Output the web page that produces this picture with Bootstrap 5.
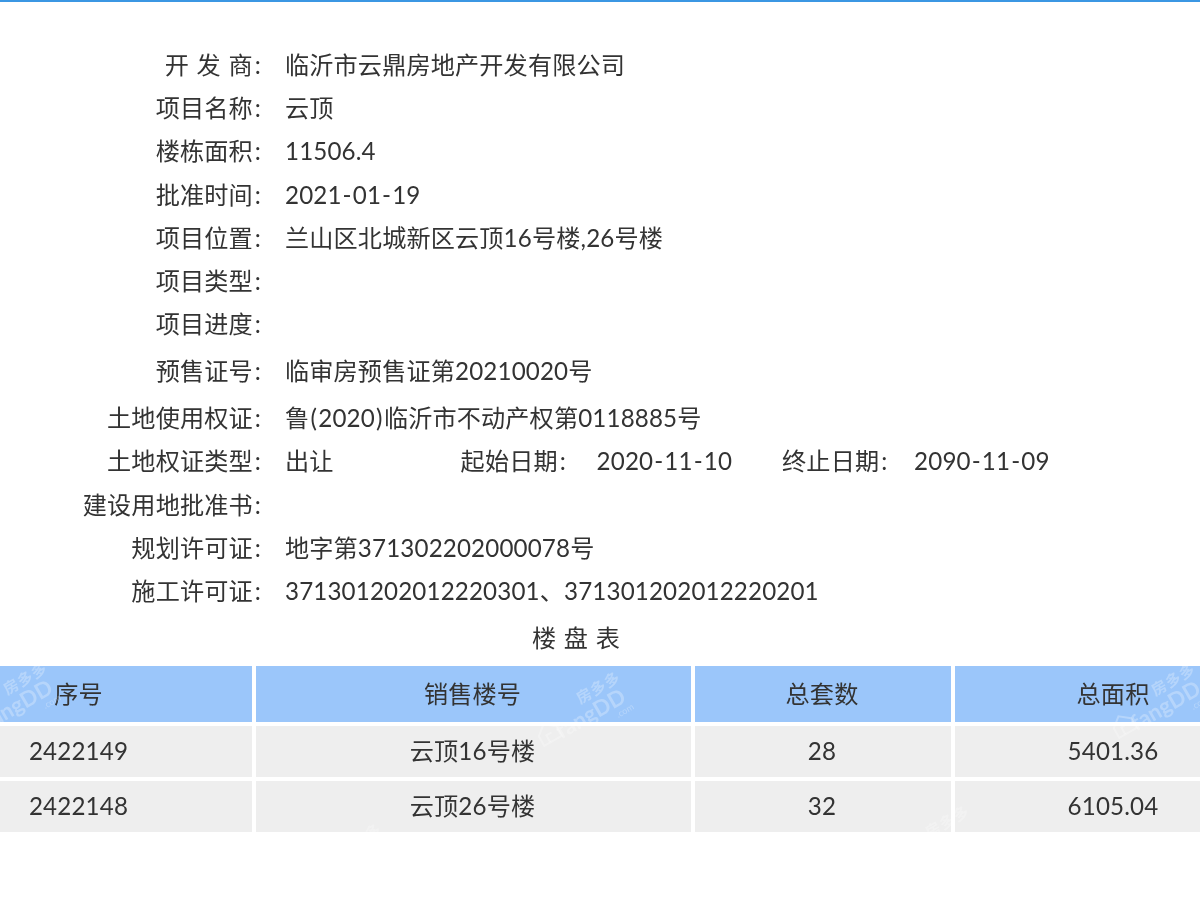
<!DOCTYPE html>
<html lang="zh-CN">
<head>
<meta charset="utf-8">
<title>楼盘信息</title>
<link rel="stylesheet" href="https://cdn.jsdelivr.net/npm/bootstrap@5.3.0/dist/css/bootstrap.min.css">
<style>
html,body{height:100%;overflow:hidden;background:#fff}
body{font-family:Lato,"Noto Sans CJK SC",sans-serif;color:#333;font-size:24.15px;letter-spacing:.15px;line-height:43.2px;word-spacing:1.3px;filter:blur(.3px)}
.topline{height:2px;background:#3b97e3}
.info{padding-top:41px}
.info-row{display:flex;height:43.2px}
.info-row.tall{height:47px;align-items:center;padding-top:4px}
.info-key{width:261px;text-align:right;flex:none;white-space:pre}
.info-key i,.info-mid i,.info-mid2 i{font-style:normal;margin-left:2px}
.info-val{margin-left:24px;white-space:pre}
.info-val .hy{margin:0 1px}
.info-val .pa{margin:0 1.2px}
.info-mid{margin-left:127px;width:136px;white-space:pre}
.info-mid2{margin-left:50px;width:132px;white-space:pre}
.plan-title{text-align:center;height:47px;line-height:50px;margin-top:1px;padding-right:48px}
.plan-wrap{position:relative;margin-left:-99px;width:1374px}
.plan-table{border-collapse:separate;border-spacing:4px;width:1374px;margin:2px 0 0;table-layout:fixed}
.plan-table th,.plan-table td{text-align:center;font-weight:400;vertical-align:middle;padding:0;color:#333}
.plan-table th{background:#9bc6fa;height:56px;padding-bottom:1px}
.plan-table td{background:#eee;height:51px;padding-bottom:2px}
.plan-table .nudge{padding-right:2px}
.wmk{position:absolute;width:120px;height:70px;transform:rotate(-30deg);color:rgba(255,255,255,.27);pointer-events:none;word-spacing:0;letter-spacing:0}
.wmk-cn{position:absolute;left:54px;top:11px;font-size:15px;line-height:18px;font-weight:700;letter-spacing:1px}
.wmk-en{position:absolute;left:20px;top:26px;font-size:22px;line-height:26px;font-weight:700}
.wmk-com{position:absolute;left:80px;top:49px;font-size:9px;line-height:10px}
.wmk-house{position:absolute;left:0;top:22px;width:24px;height:24px}
</style>
</head>
<body>
<div class="topline"></div>
<div class="info">
<div class="info-row"><div class="info-key">开 发 商<i>:</i></div><div class="info-val">临沂市云鼎房地产开发有限公司</div></div>
<div class="info-row"><div class="info-key">项目名称<i>:</i></div><div class="info-val">云顶</div></div>
<div class="info-row"><div class="info-key">楼栋面积<i>:</i></div><div class="info-val">11506.4</div></div>
<div class="info-row"><div class="info-key">批准时间<i>:</i></div><div class="info-val">2021<span class="hy">-</span>01<span class="hy">-</span>19</div></div>
<div class="info-row"><div class="info-key">项目位置<i>:</i></div><div class="info-val">兰山区北城新区云顶16号楼,26号楼</div></div>
<div class="info-row"><div class="info-key">项目类型<i>:</i></div><div class="info-val"></div></div>
<div class="info-row"><div class="info-key">项目进度<i>:</i></div><div class="info-val"></div></div>
<div class="info-row tall"><div class="info-key">预售证号<i>:</i></div><div class="info-val">临审房预售证第20210020号</div></div>
<div class="info-row tall"><div class="info-key">土地使用权证<i>:</i></div><div class="info-val">鲁<span class="pa">(</span>2020<span class="pa">)</span>临沂市不动产权第0118885号</div></div>
<div class="info-row"><div class="info-key">土地权证类型<i>:</i></div><div class="info-val">出让</div><div class="info-mid">起始日期<i>:</i></div><div class="info-val m-0">2020<span class="hy">-</span>11<span class="hy">-</span>10</div><div class="info-mid2">终止日期<i>:</i></div><div class="info-val m-0">2090<span class="hy">-</span>11<span class="hy">-</span>09</div></div>
<div class="info-row"><div class="info-key">建设用地批准书<i>:</i></div><div class="info-val"></div></div>
<div class="info-row"><div class="info-key">规划许可证<i>:</i></div><div class="info-val">地字第371302202000078号</div></div>
<div class="info-row"><div class="info-key">施工许可证<i>:</i></div><div class="info-val">371301202012220301、371301202012220201</div></div>
</div>
<div class="plan-title">楼 盘 表</div>
<div class="plan-wrap">
<table class="plan-table">
<colgroup><col style="width:347px"><col style="width:435px"><col style="width:256px"><col style="width:316px"></colgroup>
<thead><tr><th>序号</th><th class="nudge">销售楼号</th><th class="nudge">总套数</th><th>总面积</th></tr></thead>
<tbody>
<tr><td>2422149</td><td class="nudge">云顶16号楼</td><td class="nudge">28</td><td>5401.36</td></tr>
<tr><td>2422148</td><td class="nudge">云顶26号楼</td><td class="nudge">32</td><td>6105.04</td></tr>
</tbody>
</table>
<div class="wmk" style="left:56px;top:3px"><svg class="wmk-house" viewBox="0 0 24 24" fill="none" stroke="currentColor" stroke-width="2"><path d="M2 11 12 3l10 8v11H2z"/><path d="M9 22v-8h6"/></svg><div class="wmk-cn">房多多</div><div class="wmk-en">fangDD</div><div class="wmk-com">.com</div></div>
<div class="wmk" style="left:629px;top:12px"><svg class="wmk-house" viewBox="0 0 24 24" fill="none" stroke="currentColor" stroke-width="2"><path d="M2 11 12 3l10 8v11H2z"/><path d="M9 22v-8h6"/></svg><div class="wmk-cn">房多多</div><div class="wmk-en">fangDD</div><div class="wmk-com">.com</div></div>
<div class="wmk" style="left:1204px;top:4px"><svg class="wmk-house" viewBox="0 0 24 24" fill="none" stroke="currentColor" stroke-width="2"><path d="M2 11 12 3l10 8v11H2z"/><path d="M9 22v-8h6"/></svg><div class="wmk-cn">房多多</div><div class="wmk-en">fangDD</div><div class="wmk-com">.com</div></div>
<div class="wmk" style="left:390px;top:164px"><div class="wmk-cn">房多多</div></div>
<div class="wmk" style="left:978px;top:146px"><div class="wmk-cn">房多多</div></div>
</div>
</body>
</html>
